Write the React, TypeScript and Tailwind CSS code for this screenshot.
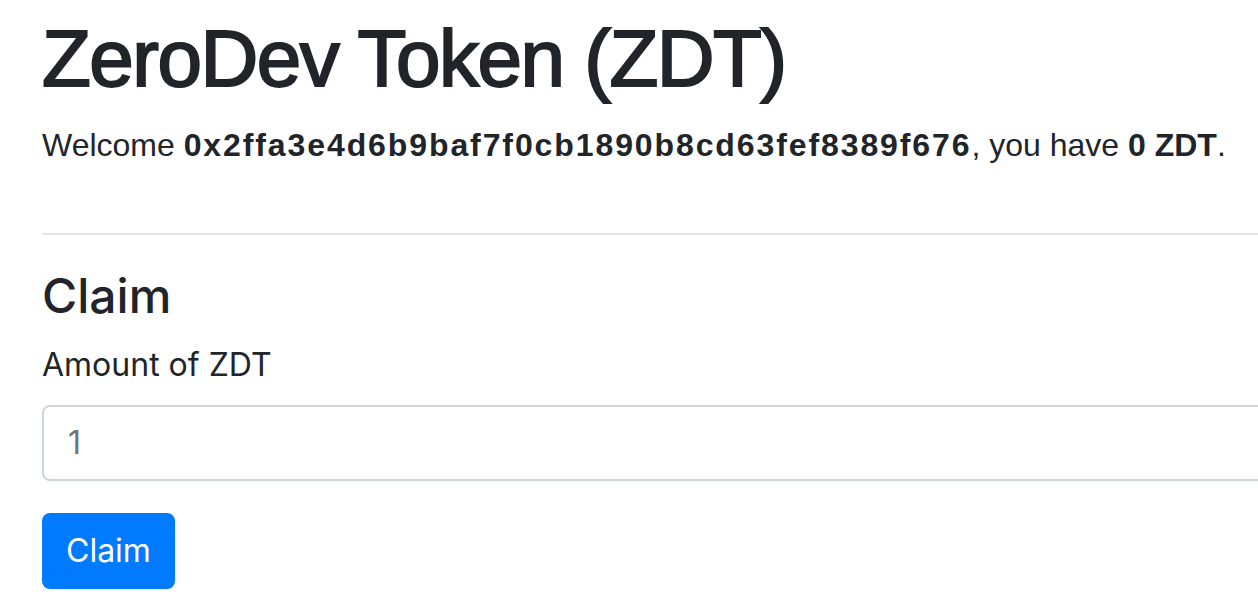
export default function App() {
  return (
    <div className="w-screen h-screen overflow-hidden bg-white text-[#212529]">
      <div className="w-[1400px] pl-[42px] pt-[11px] flex flex-col items-start">
        {/* Header */}
        <h1 className="font-['Liberation_Sans',Arial,sans-serif] text-[80px] leading-[1.2] tracking-[-1.5px] [-webkit-text-stroke:2px_#212529] mb-[14px]">
          ZeroDev Token (ZDT)
        </h1>
        <p className="font-['Liberation_Sans',Arial,sans-serif] text-[32px] leading-[1.5] mb-[32px]">
          Welcome <b className="tracking-[1.9px]">0x2ffa3e4d6b9baf7f0cb1890b8cd63fef8389f676</b>, you have <b>0 ZDT</b>.
        </p>

        <hr className="w-full border-0 border-t-2 border-[#e3e4e6] my-[32px]" />

        {/* Claim form */}
        <h4 className="font-['Inter',sans-serif] text-[48px] leading-[1.2] font-medium mb-[16px]">Claim</h4>
        <label className="block font-['Inter',sans-serif] text-[32px] leading-[1.5] mb-[16px]">Amount of ZDT</label>
        <input
          type="text"
          placeholder="1"
          className="block w-full h-[76px] px-[24px] border-2 border-[#ced4da] rounded-[8px] font-['Inter',sans-serif] text-[32px] placeholder:text-[#6c757d] outline-none mb-[32px]"
        />
        <button className="h-[76px] px-[24px] rounded-[8px] bg-[#007bff] text-white font-['Inter',sans-serif] text-[32px]">
          Claim
        </button>
      </div>
    </div>
  );
}
